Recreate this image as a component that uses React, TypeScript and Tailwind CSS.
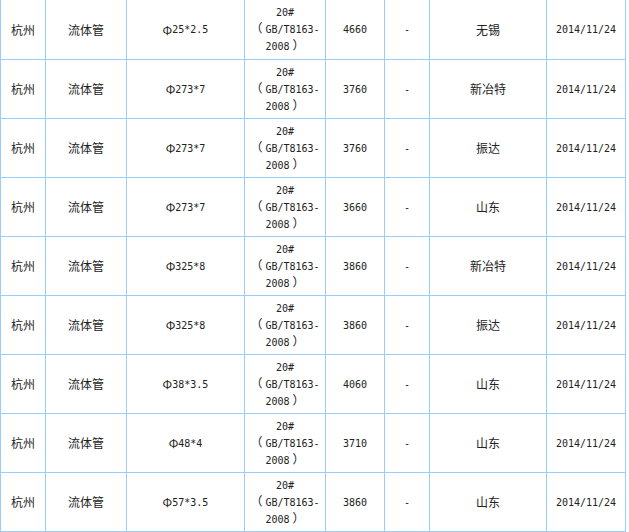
import React from 'react';

interface PriceRow {
  city: string;
  product: string;
  spec: string;
  price: string;
  change: string;
  origin: string;
  date: string;
}

const ROWS: PriceRow[] = [
  { city: '杭州', product: '流体管', spec: '25*2.5', price: '4660', change: '-', origin: '无锡', date: '2014/11/24' },
  { city: '杭州', product: '流体管', spec: '273*7', price: '3760', change: '-', origin: '新冶特', date: '2014/11/24' },
  { city: '杭州', product: '流体管', spec: '273*7', price: '3760', change: '-', origin: '振达', date: '2014/11/24' },
  { city: '杭州', product: '流体管', spec: '273*7', price: '3660', change: '-', origin: '山东', date: '2014/11/24' },
  { city: '杭州', product: '流体管', spec: '325*8', price: '3860', change: '-', origin: '新冶特', date: '2014/11/24' },
  { city: '杭州', product: '流体管', spec: '325*8', price: '3860', change: '-', origin: '振达', date: '2014/11/24' },
  { city: '杭州', product: '流体管', spec: '38*3.5', price: '4060', change: '-', origin: '山东', date: '2014/11/24' },
  { city: '杭州', product: '流体管', spec: '48*4', price: '3710', change: '-', origin: '山东', date: '2014/11/24' },
  { city: '杭州', product: '流体管', spec: '57*3.5', price: '3860', change: '-', origin: '山东', date: '2014/11/24' },
];

const cjk = "[font-family:'Noto_Sans_CJK_SC',sans-serif] text-[12px]";
const mono = "[font-family:'DejaVu_Sans_Mono','Noto_Sans_CJK_SC',monospace] text-[10px]";

function Cell({ children, first, className = '' }: { children: React.ReactNode; first?: boolean; className?: string }) {
  return (
    <div
      className={`flex items-center justify-center text-center border-r border-b border-[#99ccff] ${
        first ? 'border-l' : ''
      } ${className}`}
    >
      {children}
    </div>
  );
}

export default function App() {
  return (
    <div className="w-[629px] h-[532px] bg-white text-[#222] overflow-hidden">
      <div className="grid w-[626px] grid-cols-[46px_81px_118px_81px_59px_45px_117px_79px] grid-rows-[60px_repeat(8,59px)]">
        {ROWS.map((row, i) => (
          <React.Fragment key={i}>
            <Cell first className={cjk}>{row.city}</Cell>
            <Cell className={cjk}>{row.product}</Cell>
            <Cell className={mono}>
              <span className={cjk}>Φ</span>
              {row.spec}
            </Cell>
            <Cell className={`${mono} leading-[15px]`}>
              <div>
                20#
                <br />
                <span className={`${cjk} mr-[3px]`}>（</span>GB/T8163-
                <br />
                2008<span className={`${cjk} ml-[3px]`}>）</span>
              </div>
            </Cell>
            <Cell className={mono}>{row.price}</Cell>
            <Cell className={mono}>{row.change}</Cell>
            <Cell className={cjk}>{row.origin}</Cell>
            <Cell className={mono}>{row.date}</Cell>
          </React.Fragment>
        ))}
      </div>
    </div>
  );
}
